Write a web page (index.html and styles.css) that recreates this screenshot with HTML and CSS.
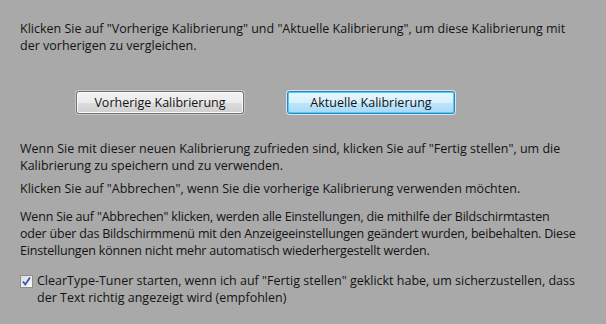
FILE: index.html
```html
<!DOCTYPE html>
<html lang="de">
<head>
  <meta charset="UTF-8">
  <title>ClearType Kalibrierung</title>
  <link rel="stylesheet" href="styles.css">
</head>
<body>
  <div class="page">
    <p class="intro">Klicken Sie auf "Vorherige Kalibrierung" und "Aktuelle Kalibrierung", um diese Kalibrierung mit der vorherigen zu vergleichen.</p>

    <div class="buttons">
      <button class="btn">Vorherige Kalibrierung</button>
      <button class="btn default">Aktuelle Kalibrierung</button>
    </div>

    <p>Wenn Sie mit dieser neuen Kalibrierung zufrieden sind, klicken Sie auf "Fertig stellen", um die Kalibrierung zu speichern und zu verwenden.</p>
    <p class="cancel">Klicken Sie auf "Abbrechen", wenn Sie die vorherige Kalibrierung verwenden möchten.</p>
    <p class="note">Wenn Sie auf "Abbrechen" klicken, werden alle Einstellungen, die mithilfe der Bildschirmtasten<br>oder über das Bildschirmmenü mit den Anzeigeeinstellungen geändert wurden, beibehalten. Diese Einstellungen können nicht mehr automatisch wiederhergestellt werden.</p>

    <label class="check">
      <span class="box">
        <svg width="11" height="11" viewBox="0 0 11 11">
          <path d="M2 5.5 L4.3 8.5 L9 1.5" fill="none" stroke="#3a55b8" stroke-width="1.8"/>
        </svg>
      </span>
      <span>ClearType-Tuner starten, wenn ich auf "Fertig stellen" geklickt habe, um sicherzustellen, dass der Text richtig angezeigt wird (empfohlen)</span>
    </label>
  </div>
</body>
</html>
```

FILE: styles.css
```css
* { box-sizing: border-box; }
body {
  margin: 0;
  background: #a9a9a9;
  font-family: 'Open Sans', 'Noto Sans', sans-serif;
  font-size: 12.5px;
  line-height: 17px;
  color: #141414;
}
.page {
  padding: 20px 25px 0 20px;
  width: 606px;
}
p {
  margin: 0 0 6px 0;
}
.intro {
  margin-bottom: 0;
}
.cancel {
  margin-bottom: 11px;
}
.note {
  letter-spacing: -0.2px;
  margin-right: -12px;
}
.buttons {
  display: flex;
  gap: 43px;
  padding: 37px 0 26px 56px;
}
.btn {
  width: 168px;
  height: 23px;
  padding: 0;
  font: inherit;
  color: #141414;
  border: 1px solid #707070;
  border-radius: 3px;
  background: linear-gradient(#f2f2f2 0%, #ebebeb 50%, #dddddd 51%, #cfcfcf 100%);
  box-shadow: inset 0 0 0 1px #fafafa, 0 0 0 1px #c8c8c8;
}
.btn.default {
  border-color: #3c7fb1;
  background: linear-gradient(#eaf6fd 0%, #d9f0fc 50%, #bee6fd 51%, #a7d9f5 100%);
  box-shadow: inset 0 0 0 1px #48d0ff, 0 0 0 1px #d0e8f5;
}
.check {
  display: flex;
  gap: 4px;
  margin-top: 13px;
}
.box {
  flex: none;
  width: 13px;
  height: 13px;
  margin-top: 3px;
  border: 1px solid #8e8f8f;
  background: linear-gradient(135deg, #dcdcdc, #fbfbfb);
  display: flex;
  align-items: center;
  justify-content: center;
}
```
